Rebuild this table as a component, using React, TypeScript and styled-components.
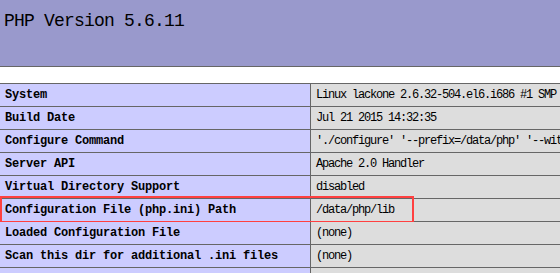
import styled, { createGlobalStyle } from 'styled-components';

const MONO = `"Liberation Mono", "Noto Sans CJK SC", monospace`;

const GlobalStyle = createGlobalStyle`
	html, body {
		margin: 0;
		padding: 0;
		background: #ffffff;
		overflow: hidden;
	}
`;

type Entry = { name: string; value: string; marked?: boolean };

const ENTRIES: Entry[] = [
	{ name: 'System', value: 'Linux lackone 2.6.32-504.el6.i686 #1 SMP Wed Oct 15 03:02:07 UTC 2014 i686' },
	{ name: 'Build Date', value: 'Jul 21 2015 14:32:35' },
	{ name: 'Configure Command', value: "'./configure' '--prefix=/data/php' '--with-apxs2=/usr/local/apache/bin/apxs'" },
	{ name: 'Server API', value: 'Apache 2.0 Handler' },
	{ name: 'Virtual Directory Support', value: 'disabled' },
	{ name: 'Configuration File (php.ini) Path', value: '/data/php/lib', marked: true },
	{ name: 'Loaded Configuration File', value: '(none)' },
	{ name: 'Scan this dir for additional .ini files', value: '(none)' },
	{ name: 'Additional .ini files parsed', value: '(none)' },
];

export default function App() {
	return (
		<Page>
			<GlobalStyle />
			<Banner>
				<h1>PHP Version 5.6.11</h1>
			</Banner>
			<InfoTable>
				{ENTRIES.map((entry) => (
					<Row key={entry.name} $marked={entry.marked}>
						<Name>{entry.name}</Name>
						<Value>{entry.value}</Value>
					</Row>
				))}
			</InfoTable>
		</Page>
	);
}

const Page = styled.div`
	width: 760px;
	color: #000000;
	font-family: ${MONO};
`;

const Banner = styled.div`
	height: 66px;
	background: #9999cc;
	border-bottom: 1px solid #666666;

	& h1 {
		margin: 0;
		padding: 10px 0 0 4px;
		font-family: ${MONO};
		font-weight: normal;
		font-size: 18px;
		line-height: 22px;
		letter-spacing: -0.8px;
		white-space: nowrap;
	}
`;

const InfoTable = styled.div`
	margin-top: 16px;
	border-top: 1px solid #666666;
`;

const Row = styled.div<{ $marked?: boolean }>`
	position: relative;
	display: grid;
	grid-template-columns: 311px 1fr;
	height: 22px;
	border-bottom: 1px solid #666666;

	&::after {
		content: '';
		display: ${(p) => (p.$marked ? 'block' : 'none')};
		position: absolute;
		top: -3px;
		bottom: -2px;
		left: 0;
		width: 414px;
		box-sizing: border-box;
		border: 2px solid #ff4040;
		pointer-events: none;
	}
`;

const Name = styled.div`
	background: #ccccff;
	border-right: 1px solid #666666;
	padding-left: 5px;
	font-size: 12px;
	font-weight: bold;
	letter-spacing: -0.2px;
	line-height: 22px;
	white-space: nowrap;
	overflow: hidden;
`;

const Value = styled.div`
	background: #dddddd;
	padding-left: 5px;
	font-size: 12px;
	letter-spacing: -1.2px;
	line-height: 22px;
	white-space: nowrap;
	overflow: hidden;
`;
